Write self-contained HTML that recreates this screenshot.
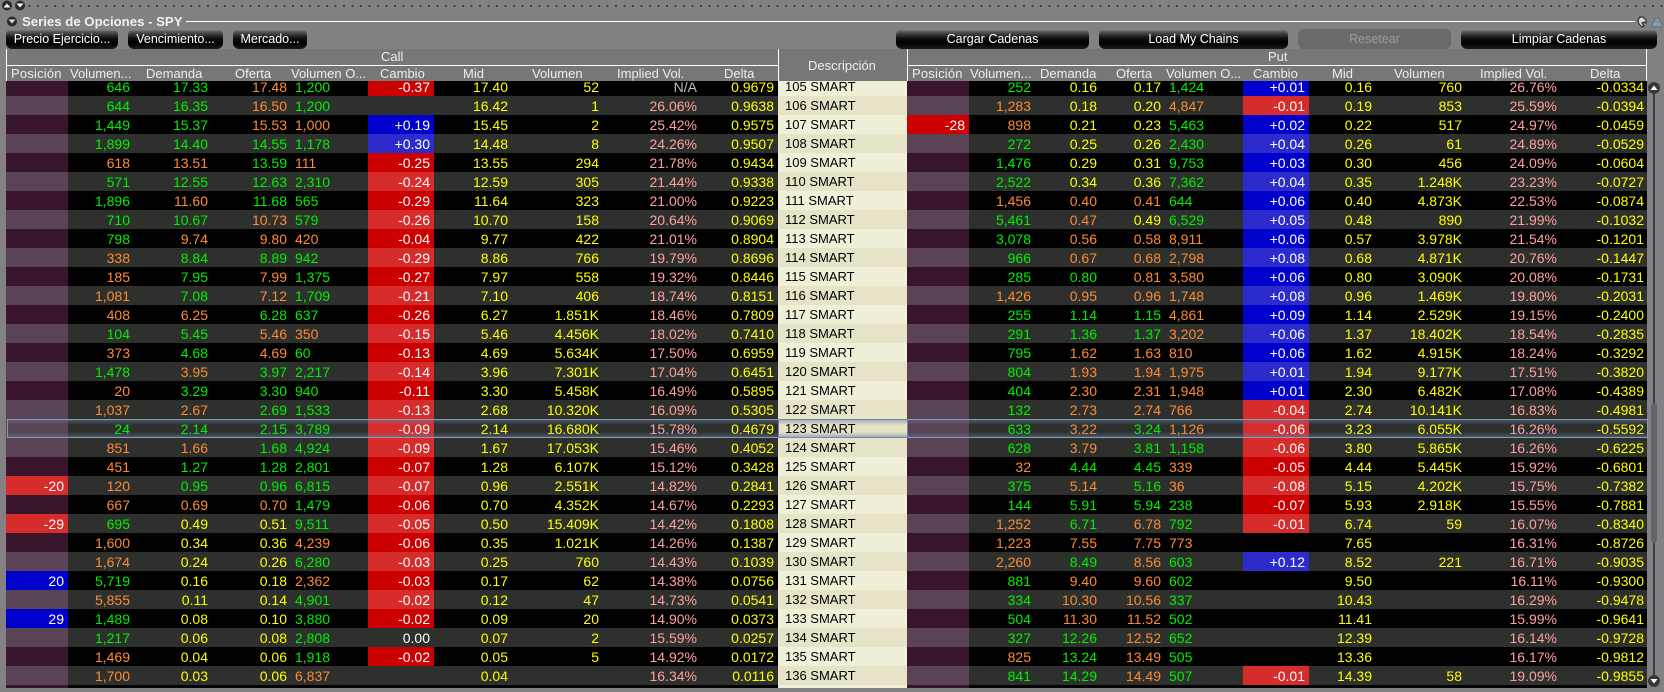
<!DOCTYPE html>
<html><head><meta charset="utf-8"><style>
html,body{margin:0;padding:0;background:#848185;width:1664px;height:692px;overflow:hidden}
body{position:relative;font-family:"Liberation Sans",sans-serif;font-size:14px;color:#fff}
.abs,.h,.btn{position:absolute}
.btn{top:29px;height:20px;line-height:20px;border-radius:6px;background:linear-gradient(#8c8c8c 0,#555 15%,#111 45%,#000 70%,#1c1c1c 100%);text-align:center;font-size:12.5px;color:#fff}
.h{font-size:13px;line-height:16px;top:66px;color:#ededed;white-space:nowrap}
#tw{position:absolute;left:6px;top:81px;width:1641px;height:607px;overflow:hidden;background:#000}
table{position:absolute;top:-4px;left:0;width:1641px;table-layout:fixed;border-collapse:collapse}
tr{height:19px}
td{padding:1px 3px 0 0;text-align:right;line-height:18px;height:18px;white-space:nowrap;overflow:hidden;color:#ff0;vertical-align:top}
.a td{background:#000}.b td{background:#2d302d}
.a td.p{background:#38152a}.b td.p{background:#5a4354}
.p,.R,.B{padding-right:4px;color:#fff}
.a td.R{background:#cc0000}.b td.R{background:#d62c2c}
.a td.B{background:#0000cc}.b td.B{background:#2c2ccc}
td.w{color:#fff;padding-right:4px}
td.l{text-align:left;padding:1px 0 0 5px}
td.i{color:#ffa0a0}
td.n{color:#bdbdbd}
td.g{color:#00f000}
td.o{color:#ff8a33}
td.e{padding-right:4px}
td.d{color:#000;text-align:left;padding:0 0 0 7px;font-size:13px;line-height:19px;height:19px}
.a td.d{background:#f0f0d8}.b td.d{background:#e6e3c6}
</style></head><body>

<svg class="abs" style="left:0;top:0" width="1664" height="30" viewBox="0 0 1664 30">
<defs><pattern id="dt" x="28" y="0" width="8.5" height="12" patternUnits="userSpaceOnUse"><circle cx="1.5" cy="6" r="1.1" fill="#3e3c40"/></pattern></defs>
<rect x="28" y="0" width="1636" height="12" fill="url(#dt)"/>
<circle cx="7" cy="5.5" r="5" fill="#2a2a2c"/><path d="M3.5 7.5 L7 3.5 L10.5 7.5Z" fill="#fff"/>
<circle cx="20" cy="5.5" r="5" fill="#2a2a2c"/><path d="M16.5 3.5 L23.5 3.5 L20 7.5Z" fill="#fff"/>
<circle cx="12" cy="21.5" r="5" fill="#2a2a2c"/><path d="M8.5 19.5 L15.5 19.5 L12 23.5Z" fill="#ddd"/>
<rect x="186" y="21" width="1449" height="1" fill="#fff"/>
<path d="M1640 17 l3 0 3 3 0 3 -2 -1 -2 1 2 3 -2 1 -3 -3 -1 -4z" fill="#d8d8d8" stroke="#2e2e30" stroke-width="1.2"/>
<path d="M1655 18 l4 0 1 4 2 1 0 4 -10 0 0-4 2-1z" fill="#7f9ab4" stroke="#5f6c7a" stroke-width="1"/>
</svg>
<div class="abs" style="left:22px;top:13px;font-weight:bold;font-size:13.2px;line-height:17px;color:#f0f0f0">Series de Opciones - SPY</div>

<div class="btn" style="left:6px;width:112px">Precio Ejercicio...</div>
<div class="btn" style="left:128px;width:95px">Vencimiento...</div>
<div class="btn" style="left:233px;width:74px">Mercado...</div>
<div class="btn" style="left:896px;width:193px">Cargar Cadenas</div>
<div class="btn" style="left:1099px;width:189px">Load My Chains</div>
<div class="btn" style="left:1298px;width:153px;background:#696b68;color:#9c9c9c">Resetear</div>
<div class="btn" style="left:1461px;width:196px">Limpiar Cadenas</div>

<div class="abs" style="left:6px;top:49px;width:1641px;height:32px;background:#79767a"></div>
<div class="abs" style="left:6px;top:49px;width:1px;height:32px;background:#fff"></div>
<div class="abs" style="left:1646px;top:49px;width:1px;height:32px;background:#fff"></div>
<div class="abs" style="left:778px;top:49px;width:1px;height:32px;background:#fff"></div>
<div class="abs" style="left:907px;top:49px;width:1px;height:32px;background:#fff"></div>
<div class="abs" style="left:6px;top:65px;width:772px;height:1px;background:#fff"></div>
<div class="abs" style="left:907px;top:65px;width:740px;height:1px;background:#fff"></div>
<div class="h" style="left:381px;top:49px">Call</div>
<div class="h" style="left:1268px;top:49px">Put</div>
<div class="h" style="left:808px;top:58px">Descripción</div>
<div class="h" style="left:11px;letter-spacing:.2px">Posición</div>
<div class="h" style="left:70px">Volumen...</div>
<div class="h" style="left:146px">Demanda</div>
<div class="h" style="left:235px">Oferta</div>
<div class="h" style="left:291px">Volumen O...</div>
<div class="h" style="left:380px">Cambio</div>
<div class="h" style="left:463px">Mid</div>
<div class="h" style="left:532px">Volumen</div>
<div class="h" style="left:617px">Implied Vol.</div>
<div class="h" style="left:724px">Delta</div>
<div class="h" style="left:912px;letter-spacing:.2px">Posición</div>
<div class="h" style="left:970px">Volumen...</div>
<div class="h" style="left:1040px">Demanda</div>
<div class="h" style="left:1116px">Oferta</div>
<div class="h" style="left:1166px">Volumen O...</div>
<div class="h" style="left:1253px">Cambio</div>
<div class="h" style="left:1332px">Mid</div>
<div class="h" style="left:1394px">Volumen</div>
<div class="h" style="left:1480px">Implied Vol.</div>
<div class="h" style="left:1590px">Delta</div>

<div id="tw"><table>
<colgroup><col style="width:62px"><col style="width:65px"><col style="width:78px"><col style="width:79px"><col style="width:78px"><col style="width:66px"><col style="width:77px"><col style="width:91px"><col style="width:98px"><col style="width:78px"><col style="width:129px"><col style="width:62px"><col style="width:65px"><col style="width:66px"><col style="width:64px"><col style="width:79px"><col style="width:66px"><col style="width:66px"><col style="width:90px"><col style="width:95px"><col style="width:87px"></colgroup>
<tr class="a"><td class="p"></td><td class="g">646</td><td class="g">17.33</td><td class="o">17.48</td><td class="l g">1,200</td><td class="R">-0.37</td><td>17.40</td><td>52</td><td class="n">N/A</td><td class="e">0.9679</td><td class="d">105 SMART</td><td class="p"></td><td class="g">252</td><td>0.16</td><td>0.17</td><td class="l g">1,424</td><td class="B">+0.01</td><td>0.16</td><td>760</td><td class="i">26.76%</td><td>-0.0334</td></tr>
<tr class="b"><td class="p"></td><td class="g">644</td><td class="g">16.35</td><td class="o">16.50</td><td class="l g">1,200</td><td></td><td>16.42</td><td>1</td><td class="i">26.06%</td><td class="e">0.9638</td><td class="d">106 SMART</td><td class="p"></td><td class="o">1,283</td><td>0.18</td><td>0.20</td><td class="l o">4,847</td><td class="R">-0.01</td><td>0.19</td><td>853</td><td class="i">25.59%</td><td>-0.0394</td></tr>
<tr class="a"><td class="p"></td><td class="g">1,449</td><td class="g">15.37</td><td class="o">15.53</td><td class="l o">1,000</td><td class="B">+0.19</td><td>15.45</td><td>2</td><td class="i">25.42%</td><td class="e">0.9575</td><td class="d">107 SMART</td><td class="p R">-28</td><td class="o">898</td><td>0.21</td><td>0.23</td><td class="l g">5,463</td><td class="B">+0.02</td><td>0.22</td><td>517</td><td class="i">24.97%</td><td>-0.0459</td></tr>
<tr class="b"><td class="p"></td><td class="g">1,899</td><td class="g">14.40</td><td class="g">14.55</td><td class="l g">1,178</td><td class="B">+0.30</td><td>14.48</td><td>8</td><td class="i">24.26%</td><td class="e">0.9507</td><td class="d">108 SMART</td><td class="p"></td><td class="g">272</td><td>0.25</td><td>0.26</td><td class="l g">2,430</td><td class="B">+0.04</td><td>0.26</td><td>61</td><td class="i">24.89%</td><td>-0.0529</td></tr>
<tr class="a"><td class="p"></td><td class="o">618</td><td class="o">13.51</td><td class="g">13.59</td><td class="l o">111</td><td class="R">-0.25</td><td>13.55</td><td>294</td><td class="i">21.78%</td><td class="e">0.9434</td><td class="d">109 SMART</td><td class="p"></td><td class="g">1,476</td><td>0.29</td><td>0.31</td><td class="l g">9,753</td><td class="B">+0.03</td><td>0.30</td><td>456</td><td class="i">24.09%</td><td>-0.0604</td></tr>
<tr class="b"><td class="p"></td><td class="g">571</td><td class="g">12.55</td><td class="g">12.63</td><td class="l g">2,310</td><td class="R">-0.24</td><td>12.59</td><td>305</td><td class="i">21.44%</td><td class="e">0.9338</td><td class="d">110 SMART</td><td class="p"></td><td class="g">2,522</td><td>0.34</td><td>0.36</td><td class="l g">7,362</td><td class="B">+0.04</td><td>0.35</td><td>1.248K</td><td class="i">23.23%</td><td>-0.0727</td></tr>
<tr class="a"><td class="p"></td><td class="g">1,896</td><td class="o">11.60</td><td class="g">11.68</td><td class="l g">565</td><td class="R">-0.29</td><td>11.64</td><td>323</td><td class="i">21.00%</td><td class="e">0.9223</td><td class="d">111 SMART</td><td class="p"></td><td class="o">1,456</td><td class="o">0.40</td><td class="o">0.41</td><td class="l g">644</td><td class="B">+0.06</td><td>0.40</td><td>4.873K</td><td class="i">22.53%</td><td>-0.0874</td></tr>
<tr class="b"><td class="p"></td><td class="g">710</td><td class="g">10.67</td><td class="o">10.73</td><td class="l g">579</td><td class="R">-0.26</td><td>10.70</td><td>158</td><td class="i">20.64%</td><td class="e">0.9069</td><td class="d">112 SMART</td><td class="p"></td><td class="g">5,461</td><td class="o">0.47</td><td>0.49</td><td class="l g">6,529</td><td class="B">+0.05</td><td>0.48</td><td>890</td><td class="i">21.99%</td><td>-0.1032</td></tr>
<tr class="a"><td class="p"></td><td class="g">798</td><td class="o">9.74</td><td class="o">9.80</td><td class="l o">420</td><td class="R">-0.04</td><td>9.77</td><td>422</td><td class="i">21.01%</td><td class="e">0.8904</td><td class="d">113 SMART</td><td class="p"></td><td class="g">3,078</td><td class="o">0.56</td><td class="o">0.58</td><td class="l o">8,911</td><td class="B">+0.06</td><td>0.57</td><td>3.978K</td><td class="i">21.54%</td><td>-0.1201</td></tr>
<tr class="b"><td class="p"></td><td class="o">338</td><td class="g">8.84</td><td class="g">8.89</td><td class="l g">942</td><td class="R">-0.29</td><td>8.86</td><td>766</td><td class="i">19.79%</td><td class="e">0.8696</td><td class="d">114 SMART</td><td class="p"></td><td class="g">966</td><td class="o">0.67</td><td class="o">0.68</td><td class="l o">2,798</td><td class="B">+0.08</td><td>0.68</td><td>4.871K</td><td class="i">20.76%</td><td>-0.1447</td></tr>
<tr class="a"><td class="p"></td><td class="o">185</td><td class="g">7.95</td><td class="o">7.99</td><td class="l g">1,375</td><td class="R">-0.27</td><td>7.97</td><td>558</td><td class="i">19.32%</td><td class="e">0.8446</td><td class="d">115 SMART</td><td class="p"></td><td class="g">285</td><td class="g">0.80</td><td class="o">0.81</td><td class="l o">3,580</td><td class="B">+0.06</td><td>0.80</td><td>3.090K</td><td class="i">20.08%</td><td>-0.1731</td></tr>
<tr class="b"><td class="p"></td><td class="o">1,081</td><td class="g">7.08</td><td class="o">7.12</td><td class="l g">1,709</td><td class="R">-0.21</td><td>7.10</td><td>406</td><td class="i">18.74%</td><td class="e">0.8151</td><td class="d">116 SMART</td><td class="p"></td><td class="o">1,426</td><td class="o">0.95</td><td class="o">0.96</td><td class="l o">1,748</td><td class="B">+0.08</td><td>0.96</td><td>1.469K</td><td class="i">19.80%</td><td>-0.2031</td></tr>
<tr class="a"><td class="p"></td><td class="o">408</td><td class="o">6.25</td><td class="g">6.28</td><td class="l g">637</td><td class="R">-0.26</td><td>6.27</td><td>1.851K</td><td class="i">18.46%</td><td class="e">0.7809</td><td class="d">117 SMART</td><td class="p"></td><td class="g">255</td><td class="g">1.14</td><td class="g">1.15</td><td class="l o">4,861</td><td class="B">+0.09</td><td>1.14</td><td>2.529K</td><td class="i">19.15%</td><td>-0.2400</td></tr>
<tr class="b"><td class="p"></td><td class="g">104</td><td class="g">5.45</td><td class="o">5.46</td><td class="l o">350</td><td class="R">-0.15</td><td>5.46</td><td>4.456K</td><td class="i">18.02%</td><td class="e">0.7410</td><td class="d">118 SMART</td><td class="p"></td><td class="g">291</td><td class="g">1.36</td><td class="g">1.37</td><td class="l o">3,202</td><td class="B">+0.06</td><td>1.37</td><td>18.402K</td><td class="i">18.54%</td><td>-0.2835</td></tr>
<tr class="a"><td class="p"></td><td class="o">373</td><td class="g">4.68</td><td class="o">4.69</td><td class="l g">60</td><td class="R">-0.13</td><td>4.69</td><td>5.634K</td><td class="i">17.50%</td><td class="e">0.6959</td><td class="d">119 SMART</td><td class="p"></td><td class="g">795</td><td class="o">1.62</td><td class="o">1.63</td><td class="l o">810</td><td class="B">+0.06</td><td>1.62</td><td>4.915K</td><td class="i">18.24%</td><td>-0.3292</td></tr>
<tr class="b"><td class="p"></td><td class="g">1,478</td><td class="o">3.95</td><td class="g">3.97</td><td class="l g">2,217</td><td class="R">-0.14</td><td>3.96</td><td>7.301K</td><td class="i">17.04%</td><td class="e">0.6451</td><td class="d">120 SMART</td><td class="p"></td><td class="g">804</td><td class="o">1.93</td><td class="o">1.94</td><td class="l o">1,975</td><td class="B">+0.01</td><td>1.94</td><td>9.177K</td><td class="i">17.51%</td><td>-0.3820</td></tr>
<tr class="a"><td class="p"></td><td class="o">20</td><td class="g">3.29</td><td class="g">3.30</td><td class="l g">940</td><td class="R">-0.11</td><td>3.30</td><td>5.458K</td><td class="i">16.49%</td><td class="e">0.5895</td><td class="d">121 SMART</td><td class="p"></td><td class="g">404</td><td class="o">2.30</td><td class="o">2.31</td><td class="l o">1,948</td><td class="B">+0.01</td><td>2.30</td><td>6.482K</td><td class="i">17.08%</td><td>-0.4389</td></tr>
<tr class="b"><td class="p"></td><td class="o">1,037</td><td class="o">2.67</td><td class="g">2.69</td><td class="l g">1,533</td><td class="R">-0.13</td><td>2.68</td><td>10.320K</td><td class="i">16.09%</td><td class="e">0.5305</td><td class="d">122 SMART</td><td class="p"></td><td class="g">132</td><td class="o">2.73</td><td class="o">2.74</td><td class="l o">766</td><td class="R">-0.04</td><td>2.74</td><td>10.141K</td><td class="i">16.83%</td><td>-0.4981</td></tr>
<tr class="b"><td class="p"></td><td class="g">24</td><td class="g">2.14</td><td class="g">2.15</td><td class="l g">3,789</td><td class="R">-0.09</td><td>2.14</td><td>16.680K</td><td class="i">15.78%</td><td class="e">0.4679</td><td class="d">123 SMART</td><td class="p"></td><td class="g">633</td><td class="o">3.22</td><td class="g">3.24</td><td class="l o">1,126</td><td class="R">-0.06</td><td>3.23</td><td>6.055K</td><td class="i">16.26%</td><td>-0.5592</td></tr>
<tr class="b"><td class="p"></td><td class="o">851</td><td class="o">1.66</td><td class="g">1.68</td><td class="l g">4,924</td><td class="R">-0.09</td><td>1.67</td><td>17.053K</td><td class="i">15.46%</td><td class="e">0.4052</td><td class="d">124 SMART</td><td class="p"></td><td class="g">628</td><td class="o">3.79</td><td class="g">3.81</td><td class="l g">1,158</td><td class="R">-0.06</td><td>3.80</td><td>5.865K</td><td class="i">16.26%</td><td>-0.6225</td></tr>
<tr class="a"><td class="p"></td><td class="o">451</td><td class="g">1.27</td><td class="g">1.28</td><td class="l g">2,801</td><td class="R">-0.07</td><td>1.28</td><td>6.107K</td><td class="i">15.12%</td><td class="e">0.3428</td><td class="d">125 SMART</td><td class="p"></td><td class="o">32</td><td class="g">4.44</td><td class="g">4.45</td><td class="l o">339</td><td class="R">-0.05</td><td>4.44</td><td>5.445K</td><td class="i">15.92%</td><td>-0.6801</td></tr>
<tr class="b"><td class="p R">-20</td><td class="o">120</td><td class="g">0.95</td><td class="g">0.96</td><td class="l g">6,815</td><td class="R">-0.07</td><td>0.96</td><td>2.551K</td><td class="i">14.82%</td><td class="e">0.2841</td><td class="d">126 SMART</td><td class="p"></td><td class="g">375</td><td class="o">5.14</td><td class="g">5.16</td><td class="l o">36</td><td class="R">-0.08</td><td>5.15</td><td>4.202K</td><td class="i">15.75%</td><td>-0.7382</td></tr>
<tr class="a"><td class="p"></td><td class="o">667</td><td class="o">0.69</td><td class="o">0.70</td><td class="l g">1,479</td><td class="R">-0.06</td><td>0.70</td><td>4.352K</td><td class="i">14.67%</td><td class="e">0.2293</td><td class="d">127 SMART</td><td class="p"></td><td class="g">144</td><td class="g">5.91</td><td class="g">5.94</td><td class="l g">238</td><td class="R">-0.07</td><td>5.93</td><td>2.918K</td><td class="i">15.55%</td><td>-0.7881</td></tr>
<tr class="b"><td class="p R">-29</td><td class="g">695</td><td>0.49</td><td>0.51</td><td class="l g">9,511</td><td class="R">-0.05</td><td>0.50</td><td>15.409K</td><td class="i">14.42%</td><td class="e">0.1808</td><td class="d">128 SMART</td><td class="p"></td><td class="o">1,252</td><td class="g">6.71</td><td class="o">6.78</td><td class="l g">792</td><td class="R">-0.01</td><td>6.74</td><td>59</td><td class="i">16.07%</td><td>-0.8340</td></tr>
<tr class="a"><td class="p"></td><td class="o">1,600</td><td>0.34</td><td>0.36</td><td class="l o">4,239</td><td class="R">-0.06</td><td>0.35</td><td>1.021K</td><td class="i">14.26%</td><td class="e">0.1387</td><td class="d">129 SMART</td><td class="p"></td><td class="o">1,223</td><td class="o">7.55</td><td class="o">7.75</td><td class="l o">773</td><td></td><td>7.65</td><td></td><td class="i">16.31%</td><td>-0.8726</td></tr>
<tr class="b"><td class="p"></td><td class="o">1,674</td><td>0.24</td><td>0.26</td><td class="l g">6,280</td><td class="R">-0.03</td><td>0.25</td><td>760</td><td class="i">14.43%</td><td class="e">0.1039</td><td class="d">130 SMART</td><td class="p"></td><td class="o">2,260</td><td class="g">8.49</td><td class="o">8.56</td><td class="l g">603</td><td class="B">+0.12</td><td>8.52</td><td>221</td><td class="i">16.71%</td><td>-0.9035</td></tr>
<tr class="a"><td class="p B">20</td><td class="g">5,719</td><td>0.16</td><td>0.18</td><td class="l o">2,362</td><td class="R">-0.03</td><td>0.17</td><td>62</td><td class="i">14.38%</td><td class="e">0.0756</td><td class="d">131 SMART</td><td class="p"></td><td class="g">881</td><td class="o">9.40</td><td class="o">9.60</td><td class="l g">602</td><td></td><td>9.50</td><td></td><td class="i">16.11%</td><td>-0.9300</td></tr>
<tr class="b"><td class="p"></td><td class="o">5,855</td><td>0.11</td><td>0.14</td><td class="l g">4,901</td><td class="R">-0.02</td><td>0.12</td><td>47</td><td class="i">14.73%</td><td class="e">0.0541</td><td class="d">132 SMART</td><td class="p"></td><td class="g">334</td><td class="o">10.30</td><td class="o">10.56</td><td class="l g">337</td><td></td><td>10.43</td><td></td><td class="i">16.29%</td><td>-0.9478</td></tr>
<tr class="a"><td class="p B">29</td><td class="g">1,489</td><td>0.08</td><td>0.10</td><td class="l g">3,880</td><td class="R">-0.02</td><td>0.09</td><td>20</td><td class="i">14.90%</td><td class="e">0.0373</td><td class="d">133 SMART</td><td class="p"></td><td class="g">504</td><td class="o">11.30</td><td class="o">11.52</td><td class="l g">502</td><td></td><td>11.41</td><td></td><td class="i">15.99%</td><td>-0.9641</td></tr>
<tr class="b"><td class="p"></td><td class="g">1,217</td><td>0.06</td><td>0.08</td><td class="l g">2,808</td><td class="w">0.00</td><td>0.07</td><td>2</td><td class="i">15.59%</td><td class="e">0.0257</td><td class="d">134 SMART</td><td class="p"></td><td class="g">327</td><td class="g">12.26</td><td class="o">12.52</td><td class="l g">652</td><td></td><td>12.39</td><td></td><td class="i">16.14%</td><td>-0.9728</td></tr>
<tr class="a"><td class="p"></td><td class="o">1,469</td><td>0.04</td><td>0.06</td><td class="l g">1,918</td><td class="R">-0.02</td><td>0.05</td><td>5</td><td class="i">14.92%</td><td class="e">0.0172</td><td class="d">135 SMART</td><td class="p"></td><td class="o">825</td><td class="g">13.24</td><td class="o">13.49</td><td class="l g">505</td><td></td><td>13.36</td><td></td><td class="i">16.17%</td><td>-0.9812</td></tr>
<tr class="b"><td class="p"></td><td class="o">1,700</td><td>0.03</td><td>0.06</td><td class="l o">6,837</td><td></td><td>0.04</td><td></td><td class="i">16.34%</td><td class="e">0.0116</td><td class="d">136 SMART</td><td class="p"></td><td class="g">841</td><td class="g">14.29</td><td class="o">14.49</td><td class="l g">507</td><td class="R">-0.01</td><td>14.39</td><td>58</td><td class="i">19.09%</td><td>-0.9855</td></tr>
<tr class="a"><td class="p"></td><td></td><td></td><td></td><td></td><td></td><td></td><td></td><td></td><td></td><td class="d"></td><td class="p"></td><td></td><td></td><td></td><td></td><td></td><td></td><td></td><td></td><td></td></tr>
</table></div>

<div class="abs" style="left:7px;top:419px;width:1639px;height:17px;border:1px solid #8f9ba6;background:linear-gradient(rgba(90,125,170,.5),rgba(90,125,170,0) 30%,rgba(90,125,170,0) 70%,rgba(90,125,170,.5))"></div>
<div class="abs" style="left:778px;top:419px;width:128px;height:17px;border:1px solid #6f8aa8"></div>

<svg class="abs" style="left:1647px;top:81px" width="17" height="611" viewBox="0 0 17 611">
<rect x="6" y="5" width="2" height="596" fill="#3a3c40"/>
<rect x="4" y="322" width="6" height="140" rx="3" fill="#5f656b"/>
<circle cx="7" cy="7" r="6" fill="#38383a"/><path d="M3.5 9 L7 4.5 L10.5 9Z" fill="#fff"/>
<circle cx="7" cy="600" r="6" fill="#38383a"/><path d="M3.5 598 L10.5 598 L7 602.5Z" fill="#fff"/>
</svg>
</body></html>
